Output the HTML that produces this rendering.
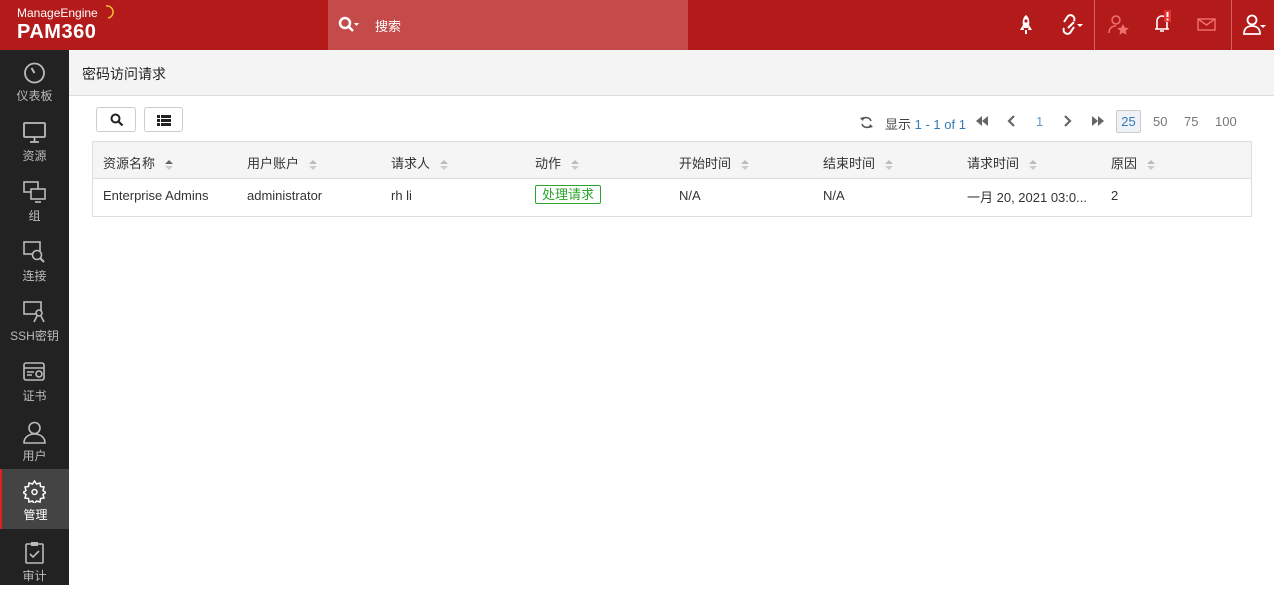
<!DOCTYPE html><html><head><meta charset="utf-8"><style>
*{box-sizing:border-box;margin:0;padding:0}
body{width:1274px;height:585px;overflow:hidden;font-family:"Liberation Sans","Noto Sans CJK SC",sans-serif;font-size:13px;color:#333;background:#fff;position:relative}
.hdr{position:absolute;left:0;top:0;width:1274px;height:50px;background:#b31b1b}
.logo1{position:absolute;left:17px;top:6px;color:#fff;font-size:12px}
.logo2{position:absolute;left:17px;top:21px;color:#fff;font-size:20px;font-weight:bold;letter-spacing:.5px}
.search{position:absolute;left:328px;top:0;width:360px;height:50px;background:#c54b4b;color:#fff}
.sep{position:absolute;top:0;width:1px;height:50px;background:#d86060}
.side{position:absolute;left:0;top:50px;width:69px;height:535px;background:#222}
.it{position:absolute;left:0;width:69px;height:60px;text-align:center;color:#bbb;font-size:12px}
.it svg{position:absolute;left:23px;top:11px}
.it span{position:absolute;left:0;right:0;top:37px}
.act{background:#444;border-left:2px solid #d22;color:#fff}
.title{position:absolute;left:69px;top:50px;width:1205px;height:46px;background:#f4f4f4;border-bottom:1px solid #ddd;padding:14px 0 0 13px;font-size:14px;color:#222}
.btn{position:absolute;top:107px;height:25px;border:1px solid #ccc;border-radius:3px;background:#fff}
.tbl{position:absolute;left:92px;top:141px;width:1160px;height:76px;border:1px solid #ddd}
.th{position:absolute;left:0;top:0;width:1158px;height:37px;background:#f5f5f5;border-bottom:1px solid #ddd}
.c{position:absolute;font-size:13px;color:#333;white-space:nowrap}
.ar{display:inline-block;position:relative;width:8px;height:10px;margin-left:10px;vertical-align:middle}
.ar:before{content:"";position:absolute;left:0;top:0;border:4px solid transparent;border-top:0;border-bottom:4px solid #bbb}
.ar:after{content:"";position:absolute;left:0;top:6px;border:4px solid transparent;border-bottom:0;border-top:4px solid #ccc}
.ar.d:before{border-bottom-color:#666}
.pg{position:absolute;top:114px;font-size:13px;color:#777}
</style></head><body>
<div class="hdr">
<div class="logo1">ManageEngine</div><div class="logo2">PAM360</div>
<svg style="position:absolute;left:104px;top:5px" width="10" height="14"><path d="M2 1 A6 6 0 0 1 4 13" stroke="#f4c22b" stroke-width="1.5" fill="none"/></svg>
<div class="search"><svg style="position:absolute;left:10px;top:16px" width="22" height="18"><circle cx="7" cy="7" r="5" stroke="#fff" stroke-width="2.5" fill="none"/><path d="M11 11l4 4" stroke="#fff" stroke-width="2.5"/><path d="M16 7h5l-2.5 3z" fill="#fff"/></svg><span style="position:absolute;left:47px;top:16px;font-size:13px">搜索</span></div>
<svg style="position:absolute;left:1017px;top:14px" width="18" height="22"><path d="M9 1c4 3 4 9 2 13H7C5 10 5 4 9 1z M6 11l-3 5h4z M12 11l3 5h-4z M8 16h2v4H8z" fill="#fff"/><circle cx="9" cy="7" r="1.6" fill="#b31b1b"/></svg>
<svg style="position:absolute;left:1060px;top:14px" width="24" height="22"><path d="M4 14a4 4 0 0 0 6 5l4-6M14 7a4 4 0 0 0-6-5L4 8M8 14l6-6" stroke="#fff" stroke-width="2" fill="none"/><path d="M17 10h6l-3 3z" fill="#fff"/></svg>
<div class="sep" style="left:1094px"></div>
<svg style="position:absolute;left:1108px;top:14px" width="22" height="22"><circle cx="8" cy="6" r="4" stroke="#f07070" stroke-width="1.5" fill="none"/><path d="M1 19c0-5 3-7 7-7" stroke="#f07070" stroke-width="1.5" fill="none"/><path d="M15 10l1.8 3.6 4 .5-3 2.7.8 4-3.6-2-3.6 2 .8-4-3-2.7 4-.5z" fill="#f07070"/></svg>
<svg style="position:absolute;left:1152px;top:10px" width="24" height="24"><path d="M3 19h14M5 19V11a5 5 0 0 1 10 0v8M8 21h4" stroke="#fff" stroke-width="1.6" fill="none"/><rect x="12" y="0" width="7" height="12" fill="#e53030"/><rect x="14.5" y="2" width="2" height="5" fill="#fff"/><rect x="14.5" y="8.5" width="2" height="2" fill="#fff"/></svg>
<svg style="position:absolute;left:1197px;top:18px" width="20" height="14"><rect x="1" y="1" width="17" height="11" stroke="#f07070" stroke-width="1.4" fill="none"/><path d="M1 1l8.5 6 8.5-6" stroke="#f07070" stroke-width="1.4" fill="none"/></svg>
<div class="sep" style="left:1231px"></div>
<svg style="position:absolute;left:1243px;top:14px" width="24" height="22"><circle cx="9" cy="6" r="4.5" stroke="#fff" stroke-width="1.8" fill="none"/><path d="M1 20c0-6 4-8 8-8s8 2 8 8z" stroke="#fff" stroke-width="1.8" fill="none"/><path d="M17 11h6l-3 3z" fill="#fff"/></svg>
</div>
<div class="side">
<div class="it" style="top:0"><svg width="23" height="23"><circle cx="11.5" cy="12" r="9.5" stroke="#bbb" stroke-width="1.8" fill="none"/><path d="M11.5 12l-3-5" stroke="#bbb" stroke-width="2"/></svg><span>仪表板</span></div>
<div class="it" style="top:60px"><svg width="23" height="23"><rect x="1" y="2" width="21" height="14" rx="1" stroke="#bbb" stroke-width="1.8" fill="none"/><path d="M7 21h9M11.5 16v5" stroke="#bbb" stroke-width="1.8"/></svg><span>资源</span></div>
<div class="it" style="top:120px"><svg width="23" height="23"><rect x="1" y="1" width="14" height="10" stroke="#bbb" stroke-width="1.6" fill="none"/><rect x="8" y="8" width="14" height="10" stroke="#bbb" stroke-width="1.6" fill="#222"/><path d="M12 21h6" stroke="#bbb" stroke-width="1.6"/></svg><span>组</span></div>
<div class="it" style="top:180px"><svg width="23" height="23"><rect x="1" y="1" width="16" height="12" stroke="#bbb" stroke-width="1.6" fill="none"/><circle cx="14" cy="14" r="4.5" stroke="#bbb" stroke-width="1.6" fill="#222"/><path d="M17 17l4 4" stroke="#bbb" stroke-width="2"/></svg><span>连接</span></div>
<div class="it" style="top:240px"><svg width="23" height="23"><rect x="1" y="1" width="17" height="12" stroke="#bbb" stroke-width="1.6" fill="none"/><circle cx="16" cy="12" r="3" stroke="#bbb" stroke-width="1.6" fill="#222"/><path d="M14 15l-3 6M18 15l3 6" stroke="#bbb" stroke-width="1.6"/></svg><span>SSH密钥</span></div>
<div class="it" style="top:300px"><svg width="23" height="23"><rect x="1" y="2" width="20" height="17" rx="2" stroke="#bbb" stroke-width="1.6" fill="none"/><path d="M1 7h20M4 11h7M4 14h5" stroke="#bbb" stroke-width="1.6"/><circle cx="16" cy="13" r="3" stroke="#bbb" stroke-width="1.6" fill="none"/></svg><span>证书</span></div>
<div class="it" style="top:360px"><svg width="23" height="23"><circle cx="11.5" cy="7" r="5.5" stroke="#bbb" stroke-width="1.6" fill="none"/><path d="M1 22c0-6 5-9 10.5-9S22 16 22 22z" stroke="#bbb" stroke-width="1.6" fill="none"/></svg><span>用户</span></div>
<div class="it act" style="top:419px;height:60px"><svg width="23" height="23" style="left:21px"><path d="M11.5 1l2 3 3.5-1 .5 3.5 3.5.5-1 3.5 3 2-3 2 1 3.5-3.5.5-.5 3.5-3.5-1-2 3-2-3-3.5 1-.5-3.5-3.5-.5 1-3.5-3-2 3-2-1-3.5 3.5-.5.5-3.5 3.5 1z" stroke="#fff" stroke-width="1.5" fill="none"/><circle cx="11.5" cy="12" r="2.5" stroke="#fff" stroke-width="1.5" fill="none"/></svg><span style="color:#fff">管理</span></div>
<div class="it" style="top:480px"><svg width="23" height="23"><rect x="3" y="3" width="17" height="19" rx="1" stroke="#bbb" stroke-width="1.6" fill="none"/><rect x="8" y="1" width="7" height="4" fill="#bbb"/><path d="M7 13l3 3 6-6" stroke="#bbb" stroke-width="1.6" fill="none"/></svg><span>审计</span></div>
</div>
<div class="title">密码访问请求</div>
<div class="btn" style="left:96px;width:40px"><svg style="position:absolute;left:13px;top:5px" width="14" height="14"><circle cx="5.5" cy="5.5" r="4" stroke="#222" stroke-width="2" fill="none"/><path d="M8.5 8.5l4 4" stroke="#222" stroke-width="2.2"/></svg></div>
<div class="btn" style="left:144px;width:39px"><svg style="position:absolute;left:12px;top:7px" width="14" height="11"><path d="M0 0h3v3H0zM4 0h10v3H4zM0 4h3v3H0zM4 4h10v3H4zM0 8h3v3H0zM4 8h10v3H4z" fill="#222"/></svg></div>
<svg style="position:absolute;left:860px;top:116px" width="13" height="13"><path d="M11 5A5 5 0 0 0 2 4M2 8a5 5 0 0 0 9 1" stroke="#555" stroke-width="1.6" fill="none"/><path d="M0 2l3 3 1-4zM13 11l-3-3-1 4z" fill="#555"/></svg>
<div class="pg" style="left:885px;color:#444">显示 <span style="color:#337ab7">1 - 1 of 1</span></div>
<svg style="position:absolute;left:976px;top:116px" width="12" height="10"><path d="M0 5l6-5v10zM6 5l6-5v10z" fill="#666"/></svg>
<svg style="position:absolute;left:1007px;top:115px" width="8" height="12"><path d="M7 1L2 6l5 5" stroke="#666" stroke-width="2.2" fill="none"/></svg>
<div class="pg" style="left:1036px;color:#5b9bd5">1</div>
<svg style="position:absolute;left:1064px;top:115px" width="8" height="12"><path d="M1 1l5 5-5 5" stroke="#666" stroke-width="2.2" fill="none"/></svg>
<svg style="position:absolute;left:1092px;top:116px" width="12" height="10"><path d="M0 0l6 5-6 5zM6 0l6 5-6 5z" fill="#666"/></svg>
<div style="position:absolute;left:1116px;top:110px;width:25px;height:23px;background:#eef1f5;border:1px solid #ccc;border-radius:2px;color:#337ab7;text-align:center;line-height:22px;font-size:13px">25</div>
<div class="pg" style="left:1153px">50</div><div class="pg" style="left:1184px">75</div><div class="pg" style="left:1215px">100</div>
<div class="tbl"><div class="th"></div>
<div class="c" style="left:10px;top:11px">资源名称<span class="ar d"></span></div>
<div class="c" style="left:154px;top:11px">用户账户<span class="ar"></span></div>
<div class="c" style="left:298px;top:11px">请求人<span class="ar"></span></div>
<div class="c" style="left:442px;top:11px">动作<span class="ar"></span></div>
<div class="c" style="left:586px;top:11px">开始时间<span class="ar"></span></div>
<div class="c" style="left:730px;top:11px">结束时间<span class="ar"></span></div>
<div class="c" style="left:874px;top:11px">请求时间<span class="ar"></span></div>
<div class="c" style="left:1018px;top:11px">原因<span class="ar"></span></div>
<div class="c" style="left:10px;top:46px">Enterprise Admins</div>
<div class="c" style="left:154px;top:46px">administrator</div>
<div class="c" style="left:298px;top:46px">rh li</div>
<div class="c" style="left:442px;top:43px;border:1px solid #2aa52a;border-radius:2px;color:#2aa52a;padding:0 6px;font-size:13px;line-height:17px">处理请求</div>
<div class="c" style="left:586px;top:46px">N/A</div>
<div class="c" style="left:730px;top:46px">N/A</div>
<div class="c" style="left:874px;top:45px">一月 20, 2021 03:0...</div>
<div class="c" style="left:1018px;top:46px">2</div>
</div>
</body></html>
